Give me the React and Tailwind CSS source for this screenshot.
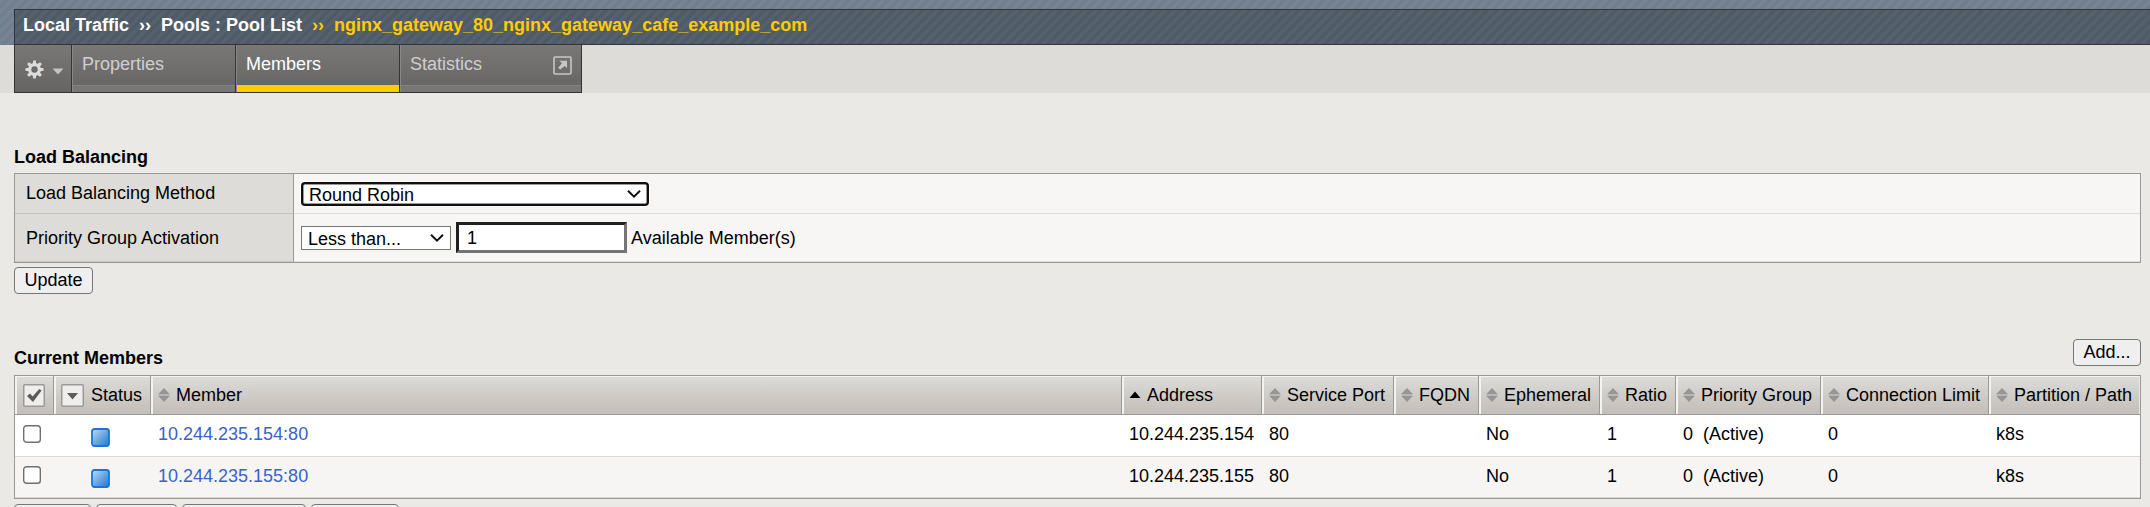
const columns = [
  { label: 'Member', width: 'w-[971px]' },
  { label: 'Address', width: 'w-[140px]', sorted: true },
  { label: 'Service Port', width: 'w-[132px]' },
  { label: 'FQDN', width: 'w-[85px]' },
  { label: 'Ephemeral', width: 'w-[121px]' },
  { label: 'Ratio', width: 'w-[76px]' },
  { label: 'Priority Group', width: 'w-[145px]' },
  { label: 'Connection Limit', width: 'w-[168px]' },
  { label: 'Partition / Path', width: 'w-[151px]' },
];

const members = [
  ['10.244.235.154:80', '10.244.235.154', '80', '', 'No', '1', '0\u00a0\u00a0(Active)', '0', 'k8s'],
  ['10.244.235.155:80', '10.244.235.155', '80', '', 'No', '1', '0\u00a0\u00a0(Active)', '0', 'k8s'],
];

const stripes =
  'bg-[repeating-linear-gradient(135deg,rgba(255,255,255,0.035)_0px,rgba(255,255,255,0.035)_3px,rgba(0,0,0,0.01)_4px,rgba(0,0,0,0.01)_7px)]';

function Chevron() {
  return (
    <svg width="14" height="10" viewBox="0 0 14 10" className="shrink-0">
      <path d="M1 1.7 L7 7.7 L13 1.7" fill="none" stroke="#111" strokeWidth="2" />
    </svg>
  );
}

function SortIcon({ sorted }) {
  if (sorted) {
    return (
      <svg width="12" height="14" viewBox="0 0 12 14" className="shrink-0">
        <path d="M0.5 10 L6 3.5 L11.5 10 Z" fill="#000" />
      </svg>
    );
  }
  return (
    <svg width="12" height="14" viewBox="0 0 12 14" className="shrink-0">
      <path d="M0.3 6 L6 0 L11.7 6 Z M0.3 8 L6 14 L11.7 8 Z" fill="#969696" />
      <path d="M0.5 6h11v2h-11z" fill="#b9b8b6" />
    </svg>
  );
}

function Gear() {
  return (
    <svg width="19" height="19" viewBox="0 0 19 19" className="shrink-0">
      <g fill="#dcdcdc">
        {[0, 45, 90, 135].map((a) => (
          <path key={a} d="M7.7 4 L8.2 0.4 H10.8 L11.3 4 V15 L10.8 18.6 H8.2 L7.7 15 Z" transform={`rotate(${a} 9.5 9.5)`} />
        ))}
        <circle cx="9.5" cy="9.5" r="6.4" />
      </g>
      <circle cx="9.5" cy="9.5" r="3.2" fill="#6b6a69" />
    </svg>
  );
}

function StatusIcon() {
  return (
    <svg width="19" height="19" viewBox="0 0 19 19">
      <defs>
        <linearGradient id="statusFill" x1="0" y1="0" x2="1" y2="1">
          <stop offset="0" stopColor="#c4dcf4" />
          <stop offset="0.5" stopColor="#6da8e2" />
          <stop offset="1" stopColor="#1f78d2" />
        </linearGradient>
      </defs>
      <rect x="1" y="1" width="17" height="17" rx="2.5" fill="url(#statusFill)" stroke="#1875d3" strokeWidth="1.8" />
    </svg>
  );
}

function HeadCell({ width, children, first }) {
  return (
    <div
      className={`${width} ${first ? '' : 'border-l border-[#999]'} flex h-full shrink-0 items-center bg-linear-to-b from-[#dddcd8] to-[#c2beba] shadow-[inset_2px_1px_0_#f3f3f1]`}
    >
      {children}
    </div>
  );
}

function Tab({ label, width, active, children }) {
  return (
    <div className={`${width} flex flex-col border-r border-[#333] shadow-[inset_1px_0_0_#8a8988]`}>
      <div className={`flex h-10 items-start justify-between pl-[10px] pr-[9px] pt-[5px] ${active ? 'text-white' : 'text-[#cfcfcf]'}`}>
        <span className="leading-7">{label}</span>
        {children}
      </div>
      <div className={`h-[7px] ${active ? 'ml-px bg-[#ffcc00]' : 'ml-px border-t border-[#838281] bg-[#787776]'}`} />
    </div>
  );
}

const button = 'flex items-center justify-center rounded-[4px] border border-[#767676] bg-[#efefef]';

export default function App() {
  return (
    <div className="h-[507px] w-[2150px] overflow-hidden bg-[#eae9e5] font-['Liberation_Sans',Arial,sans-serif] text-[18px] text-black">
      <header className={`h-[45px] bg-[#71808f] pl-[14px] pt-[9px] ${stripes}`}>
        <div className={`flex h-9 items-center whitespace-pre border-y border-l border-[#333438] bg-[#4f5b67] pb-[3px] pl-2 font-bold text-white ${stripes}`}>
          <span className="w-[116px]">Local Traffic</span>
          <span className="w-[22px]">››</span>
          <span className="w-[151px]">Pools : Pool List</span>
          <span className="w-[22px] text-[#ffcc00]">››</span>
          <span className="text-[#ffcc00]">nginx_gateway_80_nginx_gateway_cafe_example_com</span>
        </div>
      </header>

      <nav className="flex h-12 bg-[#dddcd8] pl-[14px]">
        <div className="flex border-b border-l border-[#333] bg-linear-to-b from-[#7a7877] to-[#656463]">
          <div className="flex w-[57px] items-center gap-[8px] border-r border-[#333] pl-[10px] pt-[2px]">
            <Gear />
            <svg width="12" height="7" viewBox="0 0 12 7" className="mt-[3px]">
              <path d="M0.5 0.5 H11.5 L6 6.5 Z" fill="#c4c4c4" />
            </svg>
          </div>
          <Tab label="Properties" width="w-[164px]" />
          <Tab label="Members" width="w-[164px]" active />
          <Tab label="Statistics" width="w-[182px]">
            <svg width="19" height="19" viewBox="0 0 19 19" className="mt-[6px]">
              <rect x="1" y="1" width="17" height="17" rx="1" fill="none" stroke="#c6c6c6" strokeWidth="1.6" />
              <path d="M6.5 4.8 H14 V12.3 L11.7 10 L7.2 13.6 L5.2 11.8 L9 7.3 Z" fill="#c6c6c6" />
            </svg>
          </Tab>
        </div>
      </nav>

      <main className="pl-[14px] pr-[9px]">
        <h2 className="mt-[52px] h-7 font-bold leading-6">Load Balancing</h2>
        <section className="h-[90px] border border-[#999]">
          <div className="flex h-10">
            <div className="w-[279px] border-b border-r border-b-[#c6c5c2] border-r-[#999] bg-[#dddcd8] pl-[11px] leading-[38px]">
              Load Balancing Method
            </div>
            <div className="flex flex-1 items-start border-b border-[#dddcda] bg-[#f7f6f5] pl-[9px] pt-[10px]">
              <div className="flex h-5 w-[344px] items-center justify-between rounded-[2px] border border-[#999] bg-white pl-[5px] pr-[5px] shadow-[0_0_0_2px_#101010,0_0_0_3px_#fff]">
                <span className="pt-px leading-5">Round Robin</span>
                <Chevron />
              </div>
            </div>
          </div>
          <div className="flex h-12">
            <div className="w-[279px] border-b border-r border-b-[#c6c5c2] border-r-[#999] bg-[#dddcd8] pl-[11px] leading-[48px]">
              Priority Group Activation
            </div>
            <div className="flex flex-1 items-center border-b border-[#dddcda] bg-[#f7f6f5] pl-[7px]">
              <div className="flex h-6 w-[150px] items-center justify-between border border-[#767676] bg-white pl-[6px] pr-[6px]">
                <span className="pt-[2px] leading-5">Less than...</span>
                <Chevron />
              </div>
              <div className="ml-[5px] flex h-[31px] w-[171px] items-center border-[3px] border-b-[#757575] border-l-[#202020] border-r-[#757575] border-t-[#202020] bg-white pl-[8px] pt-[2px]">
                1
              </div>
              <span className="ml-[4px] pt-[2px]">Available Member(s)</span>
            </div>
          </div>
        </section>
        <div className={`${button} mt-[4px] h-[27px] w-[79px]`}>Update</div>

        <div className="mt-[45px] flex h-9 justify-between">
          <h2 className="pt-[7px] font-bold leading-6">Current Members</h2>
          <div className={`${button} h-[27px] w-[68px]`}>Add...</div>
        </div>

        <section className="h-[124px] border border-[#999]">
          <div className="flex h-[39px] border-b border-[#999]">
            <HeadCell width="w-[38px]" first>
              <svg width="22" height="23" viewBox="0 0 22 23" className="ml-2">
                <rect x="0.75" y="0.75" width="20.5" height="21.5" rx="1" fill="#efeeed" stroke="#999" strokeWidth="1.5" />
                <path d="M4 12 L7 9.6 L9.6 12.4 L16.2 5 L18.6 6.6 L10 18 Z" fill="#5c5b5a" />
              </svg>
            </HeadCell>
            <HeadCell width="w-[97px]">
              <svg width="23" height="23" viewBox="0 0 23 23" className="ml-[7px] shrink-0">
                <rect x="0.75" y="0.75" width="21.5" height="21.5" rx="1" fill="#efeeed" stroke="#999" strokeWidth="1.5" />
                <path d="M6 9 H17 L11.5 15.5 Z" fill="#5c5b5a" />
              </svg>
              <span className="ml-[7px]">Status</span>
            </HeadCell>
            {columns.map((c) => (
              <HeadCell key={c.label} width={c.width}>
                <div className="ml-[7px] flex items-center gap-[6px] whitespace-nowrap">
                  <SortIcon sorted={c.sorted} />
                  {c.label}
                </div>
              </HeadCell>
            ))}
          </div>
          {members.map((row, i) => (
            <div
              key={row[0]}
              className={`flex border-b border-[#d9d9d8] leading-[38px] ${i === 0 ? 'h-[42px] bg-white' : 'h-[41px] bg-[#f6f5f4]'}`}
            >
              <div className={`w-[38px] pl-2 ${i === 0 ? 'pt-[10px]' : 'pt-[9px]'}`}>
                <svg width="18" height="18" viewBox="0 0 18 18">
                  <rect x="0.7" y="0.7" width="16.6" height="16.6" rx="2.8" fill="#fff" stroke="#707070" strokeWidth="1.4" />
                </svg>
              </div>
              <div className={`w-[97px] pl-[38px] ${i === 0 ? 'pt-[13px]' : 'pt-[12px]'}`}>
                <StatusIcon />
              </div>
              {row.map((value, j) => (
                <div key={j} className={`${columns[j].width} shrink-0 whitespace-nowrap pl-2 ${j === 0 ? 'text-[#3962cb]' : ''}`}>
                  {value}
                </div>
              ))}
            </div>
          ))}
        </section>
        <div className="mt-[5px] flex gap-[5px]">
          <div className={`${button} h-[27px] w-[77px]`} />
          <div className={`${button} h-[27px] w-[81px]`} />
          <div className={`${button} h-[27px] w-[124px]`} />
          <div className={`${button} h-[27px] w-[88px]`} />
        </div>
      </main>
    </div>
  );
}
